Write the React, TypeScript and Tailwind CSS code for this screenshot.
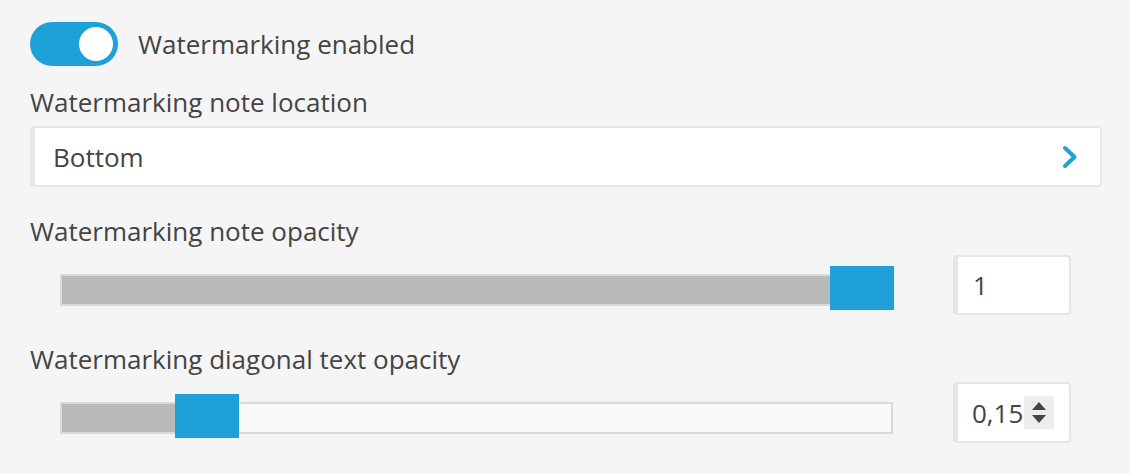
import React from "react";

const font = { fontFamily: '"Open Sans", "Liberation Sans", sans-serif' };

function Slider({ pct, thumbLeft }: { pct: number; thumbLeft: number }) {
  return (
    <div className="relative w-[833px] h-[44px]">
      <div className="absolute left-0 right-0 top-[8px] h-[32px] border-2 border-[#dadada] bg-[#fafafa]">
        <div className="h-full bg-[#bababa]" style={{ width: `${pct}%` }} />
      </div>
      <div
        className="absolute top-0 w-[64px] h-[44px] bg-[#1ea1d8]"
        style={{ left: thumbLeft }}
      />
    </div>
  );
}

export default function App() {
  return (
    <div
      className="w-[1130px] h-[474px] bg-[#f5f5f5] text-[#444444] pt-[22px] pl-[30px] pr-[28px] flex flex-col"
      style={font}
    >
      <div className="flex items-center h-[44px]">
        <div className="w-[88px] h-[44px] rounded-full bg-[#1ea1d8] relative">
          <div className="absolute right-[5px] top-[5px] w-[34px] h-[34px] rounded-full bg-white" />
        </div>
        <span className="ml-[20px] text-[26px] leading-[32px]">Watermarking enabled</span>
      </div>

      <div className="mt-[20px] text-[26px] leading-[32px]">Watermarking note location</div>

      <div className="mt-[8px] h-[61px] w-[1072px] bg-white border-2 border-[#e6e6e6] border-l-[5px] rounded-[4px] flex items-center justify-between pl-[18px] pr-[22px]">
        <span className="text-[26px] leading-[32px]">Bottom</span>
        <svg width="16" height="24" viewBox="0 0 16 24" fill="none">
          <path d="M3 3 L12.5 12 L3 21" stroke="#1ea1d8" strokeWidth="4" strokeLinecap="round" strokeLinejoin="round" />
        </svg>
      </div>

      <div className="mt-[28px] text-[26px] leading-[32px]">Watermarking note opacity</div>

      <div className="mt-[8px] flex items-start">
        <div className="ml-[30px] mt-[11px]">
          <Slider pct={100} thumbLeft={770} />
        </div>
        <div className="ml-[60px] w-[118px] h-[60px] bg-white border-2 border-[#e6e6e6] border-l-[5px] rounded-[4px] flex items-center pl-[15px]">
          <span className="text-[26px] leading-[32px]">1</span>
        </div>
      </div>

      <div className="mt-[28px] text-[26px] leading-[32px]">Watermarking diagonal text opacity</div>

      <div className="mt-[7px] flex items-start">
        <div className="ml-[30px] mt-[12px]">
          <Slider pct={15} thumbLeft={115} />
        </div>
        <div className="ml-[60px] w-[118px] h-[61px] bg-white border-2 border-[#e6e6e6] border-l-[5px] rounded-[4px] flex items-center pl-[14px]">
          <span className="text-[26px] leading-[32px]">0,15</span>
          <div className="ml-[1px] w-[30px] h-[33px] bg-[#ededed] flex flex-col items-center justify-center gap-[3px]">
            <svg width="16" height="10" viewBox="0 0 16 10">
              <path d="M8 1 L15 9 L1 9 Z" fill="#444444" />
            </svg>
            <svg width="16" height="10" viewBox="0 0 16 10">
              <path d="M1 1 L15 1 L8 9 Z" fill="#444444" />
            </svg>
          </div>
        </div>
      </div>
    </div>
  );
}
